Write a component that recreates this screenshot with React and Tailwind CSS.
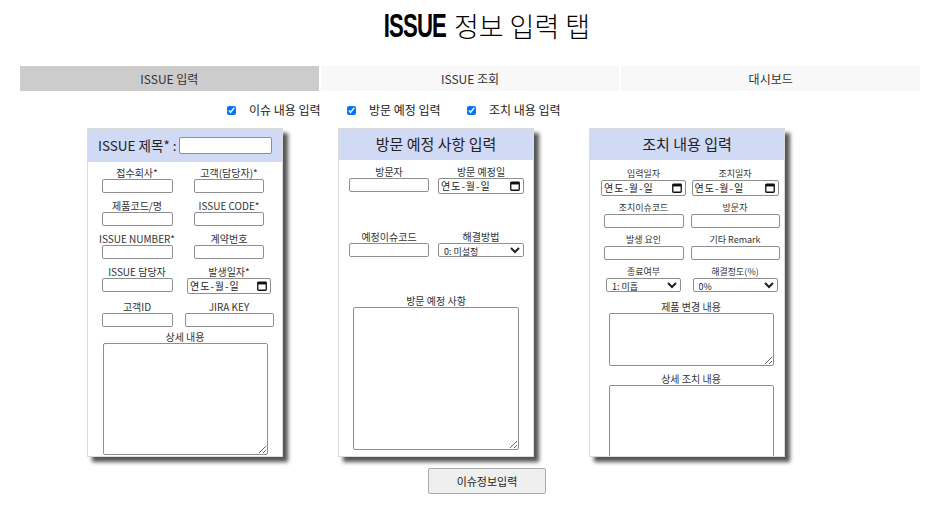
import React from 'react';

const KR = { fontFamily: '"Noto Sans CJK KR", "Noto Sans", sans-serif' };

function Cal() {
  return (
    <svg width="10" height="10" viewBox="0 0 10 10" className="shrink-0">
      <rect x="0.75" y="1.25" width="8.5" height="8" rx="0.8" fill="none" stroke="#111" strokeWidth="1.3" />
      <rect x="0.75" y="1.25" width="8.5" height="2.2" fill="#111" />
    </svg>
  );
}

function DateBox({ w }) {
  return (
    <div className={`flex h-[16px] items-center justify-between rounded-[2px] border border-[#8f8f8f] bg-white pl-[2px] pr-[3px] text-[10px] leading-none tracking-[1px] text-[#222] ${w}`}>
      <span>연도-월-일</span>
      <Cal />
    </div>
  );
}

function Text({ w }) {
  return <input type="text" className={`h-[14px] rounded-[2px] border border-[#8f8f8f] bg-white ${w}`} />;
}

function Sel({ w, value }) {
  return (
    <select
      defaultValue={value}
      className={`h-[14px] rounded-[2px] border border-[#8f8f8f] bg-white py-0 pl-[1px] pr-0 text-[9px] leading-[12px] text-[#222] ${w}`}
    >
      <option>{value}</option>
    </select>
  );
}

function Cell({ label, size = 'text-[10px]', children }) {
  return (
    <div className="flex flex-col items-center">
      <div className={`h-[12px] whitespace-nowrap leading-[12px] text-[#333] ${size}`}>{label}</div>
      {children}
    </div>
  );
}

function Panel({ children }) {
  return (
    <div className="h-[329px] w-[196px] overflow-hidden border border-[#dcdcdc] bg-white shadow-[5px_5px_4px_#555]">
      {children}
    </div>
  );
}

export default function App() {
  return (
    <div className="h-[512px] w-[948px] overflow-hidden bg-white" style={KR}>
      <h1 className="flex h-[50px] items-center justify-center pl-[12px] pt-[2px] text-[27px] font-normal text-black">
        <span
          className="mr-[8px] inline-block origin-right scale-x-[0.82] scale-y-[1.2] text-[27px] font-bold tracking-[-1px]"
          style={{ fontFamily: '"Liberation Sans Narrow", "Liberation Sans", sans-serif' }}
        >
          ISSUE
        </span>
        <span className="font-light">정보 입력 탭</span>
      </h1>

      <div className="ml-[20px] mr-[28px] mt-[16px] flex h-[25px] gap-[2px] text-[12px] text-[#333]">
        <div className="flex flex-1 items-center justify-center bg-[#cccccc]">ISSUE 입력</div>
        <div className="flex flex-1 items-center justify-center bg-[#f8f8f8]">ISSUE 조회</div>
        <div className="flex flex-1 items-center justify-center bg-[#f8f8f8]">대시보드</div>
      </div>

      <div className="mt-[12px] flex h-[14px] items-center pl-[227px] text-[12px] text-[#222]">
        {['이슈 내용 입력', '방문 예정 입력', '조치 내용 입력'].map((t) => (
          <label key={t} className="flex w-[120px] items-center">
            <input type="checkbox" defaultChecked className="m-0 h-[9px] w-[9px] accent-[#0075ff]" />
            <span className="ml-[13px]">{t}</span>
          </label>
        ))}
      </div>

      <div className="mt-[11px] flex items-start gap-[55px] pl-[87px]">
        <Panel>
          <div className="flex h-[33px] items-center whitespace-nowrap bg-[#d0daf5] pl-[10px] text-[13.5px] text-[#222]">
            <span className="shrink-0">ISSUE 제목* :</span>
            <input type="text" className="ml-[3px] h-[17px] w-[93px] shrink-0 rounded-[2px] border border-[#8f8f8f] bg-white" />
          </div>
          <div className="grid grid-cols-[92px_92px] gap-y-[7px] pl-[3px] pt-[5px]">
            <Cell label="접수회사*"><Text w="w-[71px]" /></Cell>
            <Cell label="고객(담당자)*"><Text w="w-[70px]" /></Cell>
            <Cell label="제품코드/명"><Text w="w-[71px]" /></Cell>
            <Cell label="ISSUE CODE*"><Text w="w-[70px]" /></Cell>
            <Cell label="ISSUE NUMBER*"><Text w="w-[71px]" /></Cell>
            <Cell label="계약번호"><Text w="w-[70px]" /></Cell>
            <Cell label="ISSUE 담당자"><Text w="w-[71px]" /></Cell>
            <Cell label="발생일자*"><DateBox w="w-[84px]" /></Cell>
            <Cell label="고객ID"><Text w="w-[71px]" /></Cell>
            <Cell label="JIRA KEY"><Text w="w-[89px]" /></Cell>
          </div>
          <div className="mt-[4px] flex flex-col items-center">
            <div className="h-[12px] text-[10px] leading-[12px] text-[#333]">상세 내용</div>
            <textarea className="h-[112px] w-[165px] resize rounded-[2px] border border-[#8f8f8f] bg-white" />
          </div>
        </Panel>

        <Panel>
          <div className="flex h-[31px] items-center justify-center bg-[#d0daf5] text-[15px] text-[#222]">
            방문 예정 사항 입력
          </div>
          <div className="grid grid-cols-[92px_92px] pl-[4px] pt-[6px]">
            <Cell label="방문자"><Text w="w-[80px]" /></Cell>
            <Cell label="방문 예정일"><DateBox w="w-[86px]" /></Cell>
          </div>
          <div className="mt-[37px] grid grid-cols-[92px_92px] pl-[4px]">
            <Cell label="예정이슈코드"><Text w="w-[80px]" /></Cell>
            <Cell label="해결방법"><Sel w="w-[86px]" value="0: 미설정" /></Cell>
          </div>
          <div className="mt-[38px] flex flex-col items-center">
            <div className="h-[12px] text-[10px] leading-[12px] text-[#333]">방문 예정 사항</div>
            <textarea className="h-[143px] w-[166px] resize rounded-[2px] border border-[#8f8f8f] bg-white" />
          </div>
        </Panel>

        <Panel>
          <div className="flex h-[31px] items-center justify-center bg-[#d0daf5] text-[15px] text-[#222]">
            조치 내용 입력
          </div>
          <div className="grid grid-cols-[91px_92px] gap-y-[6px] pl-[8px] pt-[8px]">
            <Cell label="입력일자" size="text-[9px]"><DateBox w="w-[85px]" /></Cell>
            <Cell label="조치일자" size="text-[9px]"><DateBox w="w-[87px]" /></Cell>
            <Cell label="조치이슈코드" size="text-[9px]"><Text w="w-[80px]" /></Cell>
            <Cell label="방문자" size="text-[9px]"><Text w="w-[89px]" /></Cell>
            <Cell label="발생 요인" size="text-[9px]"><Text w="w-[80px]" /></Cell>
            <Cell label="기타 Remark" size="text-[9px]"><Text w="w-[89px]" /></Cell>
            <Cell label="종료여부" size="text-[9px]"><Sel w="w-[75px]" value="1: 미흡" /></Cell>
            <Cell label="해결정도(%)" size="text-[9px]"><Sel w="w-[85px]" value="0%" /></Cell>
          </div>
          <div className="mt-[9px] flex flex-col items-center pl-[8px]">
            <div className="h-[12px] text-[10px] leading-[12px] text-[#333]">제품 변경 내용</div>
            <textarea className="h-[53px] w-[165px] resize rounded-[2px] border border-[#8f8f8f] bg-white" />
            <div className="mt-[7px] h-[12px] text-[10px] leading-[12px] text-[#333]">상세 조치 내용</div>
            <textarea className="h-[80px] w-[165px] resize rounded-[2px] border border-[#8f8f8f] bg-white" />
          </div>
        </Panel>
      </div>

      <div className="mt-[11px] flex pl-[428px]">
        <button className="h-[26px] w-[118px] rounded-[2px] border border-[#a9a9a9] bg-[#efefef] text-[11px] text-[#222]">
          이슈정보입력
        </button>
      </div>
    </div>
  );
}
